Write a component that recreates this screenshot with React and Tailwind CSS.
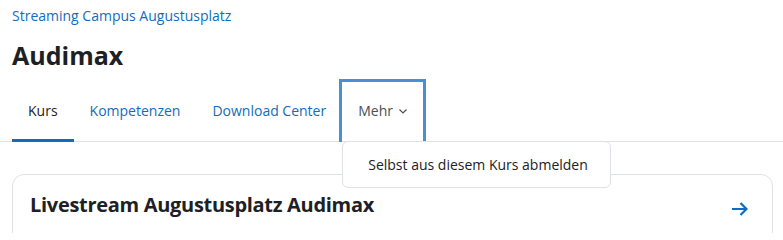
import React from "react";

const tabs = [
  { label: "Kurs", active: true },
  { label: "Kompetenzen" },
  { label: "Download Center" },
];

export default function App() {
  return (
    <div
      className="w-[783px] h-[233px] overflow-hidden bg-white text-[#1d2125]"
      style={{ fontFamily: '"Open Sans", "Noto Sans", sans-serif' }}
    >
      <div className="pl-3 pr-[10px]">
        {/* breadcrumb */}
        <div className="pt-[3px] h-[28px]">
          <a className="text-[14px] leading-[20px] text-[#0f6cbf]">Streaming Campus Augustusplatz</a>
        </div>

        <h1 className="mt-[10px] text-[25px] leading-[34px] font-bold">Audimax</h1>

        {/* secondary navigation */}
        <div className="relative mt-[7px] -mr-[10px] -ml-3 pl-3 border-b border-[#dee2e6] flex">
          {tabs.map((t) => (
            <div
              key={t.label}
              className={
                "h-[62px] px-4 flex items-center text-[14px] relative " +
                (t.active ? "text-[#1d2125]" : "text-[#0f6cbf]")
              }
            >
              {t.label}
              {t.active && <span className="absolute left-0 right-0 -bottom-px h-[3px] bg-[#0f6cbf]" />}
            </div>
          ))}
          <div className="relative h-[62px] pl-4 pr-4 flex items-center gap-[6px] text-[14px] text-[#495057]">
            Mehr
            <svg width="8" height="5" viewBox="0 0 8 5" className="mt-[2px]">
              <path d="M0.5 0.5 L4 4 L7.5 0.5" fill="none" stroke="#495057" strokeWidth="1.2" />
            </svg>
            {/* focus ring */}
            <span className="absolute -left-[3px] -right-[3px] top-0 -bottom-px border-[3px] border-b-0 border-[#4a8fd5]" />
            {/* dropdown menu */}
            <div className="absolute z-10 left-0 top-[62px] w-[269px] h-[47px] bg-white border border-[#dee2e6] rounded-md flex items-center pl-[25px] text-[14px] text-[#1d2125]">
              Selbst aus diesem Kurs abmelden
            </div>
          </div>
        </div>

        {/* course card */}
        <div className="mt-[32px] border border-[#dee2e6] rounded-[12px] h-[80px] px-[17px] pt-[15px] flex justify-between">
          <h3 className="text-[20px] leading-[30px] font-bold tracking-[-0.3px]">Livestream Augustusplatz Audimax</h3>
          <svg width="17" height="16" viewBox="0 0 17 16" className="mt-[11px] mr-[7px]">
            <path d="M1 8 H15.5 M9.5 2 L15.5 8 L9.5 14" fill="none" stroke="#0f6cbf" strokeWidth="2.2" />
          </svg>
        </div>
      </div>
    </div>
  );
}
